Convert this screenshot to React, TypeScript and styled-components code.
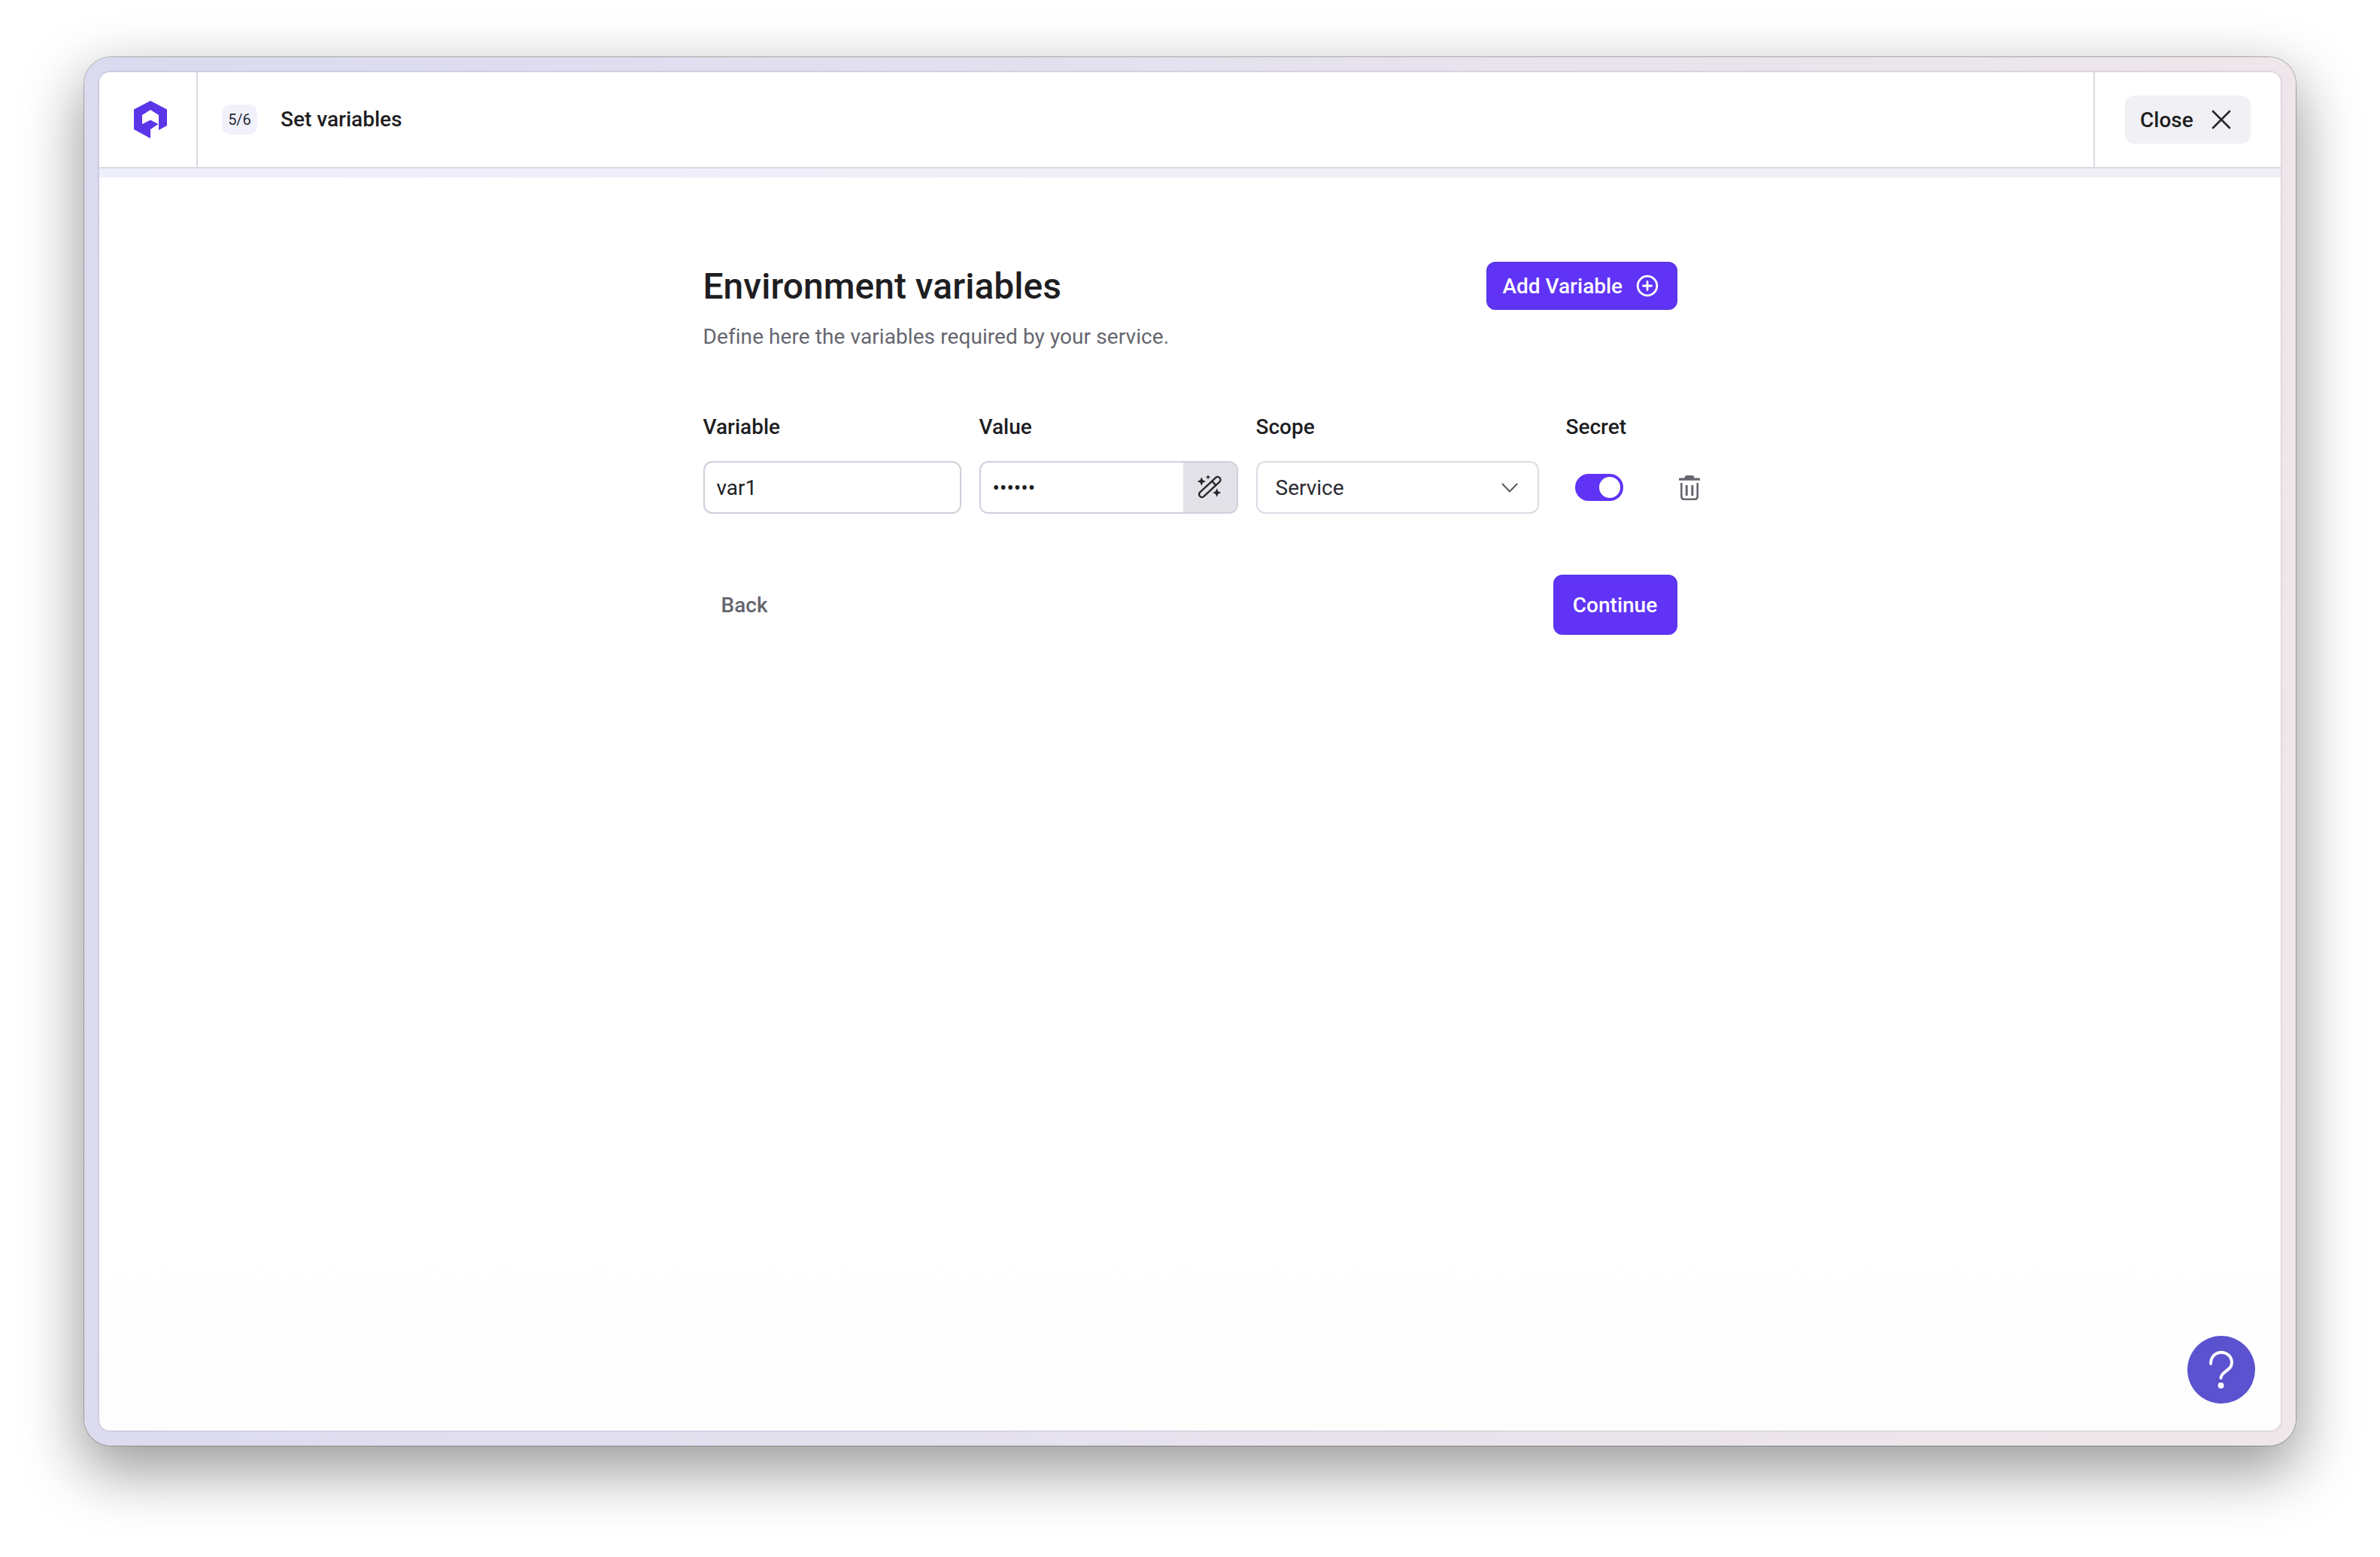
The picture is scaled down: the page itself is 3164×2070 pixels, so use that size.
import React, { ReactElement } from 'react';
import styled, { createGlobalStyle } from 'styled-components';

const GlobalStyle = createGlobalStyle`
	html, body {
		margin: 0;
		padding: 0;
		background: #fff;
	}
	* {
		box-sizing: border-box;
	}
`;

const Page = styled.div`
	width: 3164px;
	height: 2070px;
	padding: 76px 112px 0;
	overflow: hidden;
	font-family: 'Roboto', sans-serif;
	color: #1e1e22;
`;

const Frame = styled.div`
	width: 2940px;
	height: 1846px;
	padding: 20px;
	border-radius: 36px;
	background: linear-gradient(100deg, #dadaf0 0%, #e6e2ee 50%, #f0e7e9 100%);
	box-shadow: 0 0 0 1px rgba(90, 90, 90, 0.45), 0 30px 80px 4px rgba(0, 0, 0, 0.4);
`;

const Window = styled.div`
	position: relative;
	display: flex;
	flex-direction: column;
	height: 100%;
	border-radius: 14px;
	overflow: hidden;
	background: linear-gradient(180deg, #fff 85%, #fdfdfd 100%);
	box-shadow: 0 0 3px rgba(70, 60, 90, 0.35);
`;

const Header = styled.header`
	display: flex;
	align-items: stretch;
	height: 128px;
	flex: none;
	border-bottom: 2px solid #d9d9e2;
`;

const LogoCell = styled.div`
	display: flex;
	align-items: center;
	justify-content: center;
	width: 131px;
	padding-left: 7px;
	border-right: 2px solid #d9d9e2;
`;

const StepArea = styled.div`
	display: flex;
	align-items: center;
	flex: 1;
	gap: 31px;
	padding-left: 32px;
`;

const StepBadge = styled.span`
	display: flex;
	align-items: center;
	justify-content: center;
	width: 47px;
	height: 40px;
	border-radius: 12px;
	background: #f1f1fc;
	font-size: 20px;
	color: #2a2a33;
`;

const StepTitle = styled.span`
	font-size: 28px;
	font-weight: 500;
	margin-top: -1px;
	color: #1e1e22;
`;

const CloseCell = styled.div`
	display: flex;
	align-items: center;
	justify-content: center;
	width: 249px;
	border-left: 2px solid #d9d9e2;
`;

const CloseButton = styled.button`
	display: flex;
	align-items: center;
	gap: 24px;
	width: 167px;
	height: 64px;
	padding: 0 0 0 20px;
	border: none;
	border-radius: 12px;
	background: #f1f0f4;
	font: 500 28px 'Roboto', sans-serif;
	color: #1e1e22;
`;

const ProgressStrip = styled.div`
	height: 12px;
	flex: none;
	background: linear-gradient(90deg, #efeffb 0%, #f1eff5 100%);
`;

const Content = styled.main`
	width: 1295px;
	margin: 0 auto;
	padding-top: 112px;
`;

const TitleRow = styled.div`
	display: flex;
	align-items: center;
	justify-content: space-between;
	height: 64px;
`;

const Title = styled.h1`
	margin: 0;
	font-size: 48px;
	font-weight: 500;
	color: #1e1e22;
`;

const AddButton = styled.button`
	display: flex;
	align-items: center;
	gap: 18px;
	width: 254px;
	height: 64px;
	padding: 0 0 0 20px;
	border: 2px solid #5a36e8;
	border-radius: 12px;
	background: #6033f6;
	font: 500 28px 'Roboto', sans-serif;
	color: #fff;
`;

const Subtitle = styled.p`
	margin: 19px 0 0;
	font-size: 28px;
	line-height: 34px;
	letter-spacing: 0.08px;
	color: #66666f;
`;

const FieldRow = styled.div`
	display: flex;
	align-items: flex-start;
	margin-top: 86px;
`;

const Field = styled.div<{ $width: number; $gap: number }>`
	display: flex;
	flex-direction: column;
	gap: 28px;
	flex: none;
	width: ${(props) => props.$width}px;
	margin-right: ${(props) => props.$gap}px;
`;

const Label = styled.label`
	font-size: 28px;
	font-weight: 500;
	line-height: 34px;
	color: #1e1e22;
`;

const TextInput = styled.input`
	width: 100%;
	height: 70px;
	padding: 0 16px;
	border: 2px solid #cfcfdc;
	border-radius: 12px;
	outline: none;
	background: #fff;
	font: 400 28px 'Roboto', sans-serif;
	color: #1e1e22;
`;

const InputGroup = styled.div`
	display: flex;
	height: 70px;
	border: 2px solid #cfcfdc;
	border-radius: 12px;
	overflow: hidden;
`;

const GroupInput = styled.input`
	flex: 1;
	min-width: 0;
	padding: 0 16px;
	border: none;
	outline: none;
	background: #fff;
	font: 400 28px 'Roboto', sans-serif;
	color: #1e1e22;
`;

const GroupAddon = styled.div`
	display: flex;
	align-items: center;
	justify-content: center;
	width: 71px;
	flex: none;
	background: #e3e2e8;
`;

const Select = styled.div`
	display: flex;
	align-items: center;
	justify-content: space-between;
	height: 70px;
	padding: 0 26px 0 24px;
	border: 2px solid #dcdce5;
	border-radius: 12px;
	font-size: 28px;
	color: #2a2a33;
`;

const ToggleCell = styled.div`
	display: flex;
	align-items: center;
	height: 70px;
	padding-left: 12px;
`;

const Toggle = styled.div`
	display: flex;
	align-items: center;
	justify-content: flex-end;
	width: 64px;
	height: 36px;
	padding-right: 4px;
	border-radius: 18px;
	background: #6033f6;
`;

const ToggleKnob = styled.span`
	width: 28px;
	height: 28px;
	border-radius: 50%;
	background: #fff;
`;

const TrashCell = styled.div`
	display: flex;
	align-items: center;
	height: 70px;
	margin-top: 62px;
`;

const Actions = styled.div`
	display: flex;
	align-items: center;
	justify-content: space-between;
	margin-top: 81px;
`;

const BackButton = styled.button`
	padding: 0 24px;
	border: none;
	background: none;
	font: 500 28px 'Roboto', sans-serif;
	color: #66666f;
`;

const ContinueButton = styled.button`
	width: 165px;
	height: 80px;
	border: 2px solid #5a36e8;
	border-radius: 12px;
	background: #6033f6;
	font: 500 28px 'Roboto', sans-serif;
	color: #fff;
`;

const HelpButton = styled.button`
	position: absolute;
	right: 34px;
	bottom: 36px;
	display: flex;
	align-items: center;
	justify-content: center;
	width: 90px;
	height: 90px;
	padding: 0;
	border: none;
	border-radius: 50%;
	background: #5a52cf;
`;

const Logo = (): ReactElement => (
	<svg width="44" height="50" viewBox="0 0 44 50">
		<polygon
			fill="#5a36e8"
			points="22,0 44,11.5 44,33 33,39 33,19 22,12 11,19 11,31 22,25.5 32.5,31 22,38 22,50 0,38 0,11.5"
		/>
	</svg>
);

const CloseIcon = (): ReactElement => (
	<svg width="26" height="26" viewBox="0 0 26 26" fill="none" stroke="#26262c" strokeWidth="2.6" strokeLinecap="round">
		<path d="M2 2 L24 24 M24 2 L2 24" />
	</svg>
);

const PlusCircleIcon = (): ReactElement => (
	<svg width="30" height="30" viewBox="0 0 30 30" fill="none" stroke="#fff" strokeWidth="2.8" strokeLinecap="round">
		<circle cx="15" cy="15" r="12.8" />
		<path d="M15 9.5 V20.5 M9.5 15 H20.5" />
	</svg>
);

const WandIcon = (): ReactElement => (
	<svg width="32" height="32" viewBox="0 0 32 32" fill="none">
		<g fill="#26262c">
			<path d="M5.3 2.2 L7 6.3 L11 8 L7 9.7 L5.3 13.8 L3.6 9.7 L-.4 8 L3.6 6.3 Z" />
			<path d="M14 -.8 L15 1.3 L17.1 2.3 L15 3.3 L14 5.4 L13 3.3 L10.9 2.3 L13 1.3 Z" />
			<path d="M25.7 17.2 L27.4 21.3 L31.4 23 L27.4 24.7 L25.7 28.8 L24 24.7 L20 23 L24 21.3 Z" />
		</g>
		<g transform="translate(16.3 15.5) rotate(-43)" stroke="#26262c" strokeWidth="2.4">
			<rect x="-18" y="-3.8" width="36" height="7.6" rx="3.8" />
			<path d="M7.5 -3.8 V3.8" />
		</g>
	</svg>
);

const ChevronIcon = (): ReactElement => (
	<svg width="22" height="13" viewBox="0 0 22 13" fill="none" stroke="#5a5a63" strokeWidth="2" strokeLinecap="round" strokeLinejoin="round">
		<path d="M1.5 1.5 L11 11.5 L20.5 1.5" />
	</svg>
);

const TrashIcon = (): ReactElement => (
	<svg width="28" height="33" viewBox="0 0 28 33" fill="none">
		<path fill="#66666f" d="M10 0 H18 C19 0 20 1 20.5 3.4 H26.5 C27.4 3.4 28 4 28 4.8 V6.8 H0 V4.8 C0 4 .6 3.4 1.5 3.4 H7.5 C8 1 9 0 10 0 Z" />
		<g stroke="#66666f" strokeWidth="2.6">
			<path d="M3.3 10 V28 C3.3 30.4 4.6 31.7 7 31.7 H21 C23.4 31.7 24.7 30.4 24.7 28 V10" />
			<path d="M10.2 13 V27 M17.8 13 V27" strokeWidth="3" />
		</g>
	</svg>
);

const HelpIcon = (): ReactElement => (
	<svg width="32" height="50" viewBox="0 0 32 50" fill="none" stroke="#fff" strokeWidth="4" strokeLinecap="round" strokeLinejoin="round">
		<path d="M2 17 C2 8 8 2 16 2 C24 2 30 8 30 15.5 C30 21.5 26 24 21.5 27.5 C18.5 30 15.5 32 15.5 36" />
		<circle cx="15.5" cy="46" r="2" fill="#fff" />
	</svg>
);

export default function App(): ReactElement {
	return (
		<Page>
			<GlobalStyle />
			<Frame>
				<Window>
					<Header>
						<LogoCell>
							<Logo />
						</LogoCell>
						<StepArea>
							<StepBadge>5/6</StepBadge>
							<StepTitle>Set variables</StepTitle>
						</StepArea>
						<CloseCell>
							<CloseButton>
								Close
								<CloseIcon />
							</CloseButton>
						</CloseCell>
					</Header>
					<ProgressStrip />
					<Content>
						<TitleRow>
							<Title>Environment variables</Title>
							<AddButton>
								Add Variable
								<PlusCircleIcon />
							</AddButton>
						</TitleRow>
						<Subtitle>Define here the variables required by your service.</Subtitle>
						<FieldRow>
							<Field $width={343} $gap={24}>
								<Label>Variable</Label>
								<TextInput defaultValue="var1" readOnly />
							</Field>
							<Field $width={344} $gap={24}>
								<Label>Value</Label>
								<InputGroup>
									<GroupInput type="password" defaultValue="secret" readOnly />
									<GroupAddon>
										<WandIcon />
									</GroupAddon>
								</InputGroup>
							</Field>
							<Field $width={376} $gap={36}>
								<Label>Scope</Label>
								<Select>
									Service
									<ChevronIcon />
								</Select>
							</Field>
							<Field $width={150} $gap={0}>
								<Label>Secret</Label>
								<ToggleCell>
									<Toggle>
										<ToggleKnob />
									</Toggle>
								</ToggleCell>
							</Field>
							<TrashCell>
								<TrashIcon />
							</TrashCell>
						</FieldRow>
						<Actions>
							<BackButton>Back</BackButton>
							<ContinueButton>Continue</ContinueButton>
						</Actions>
					</Content>
					<HelpButton>
						<HelpIcon />
					</HelpButton>
				</Window>
			</Frame>
		</Page>
	);
}
